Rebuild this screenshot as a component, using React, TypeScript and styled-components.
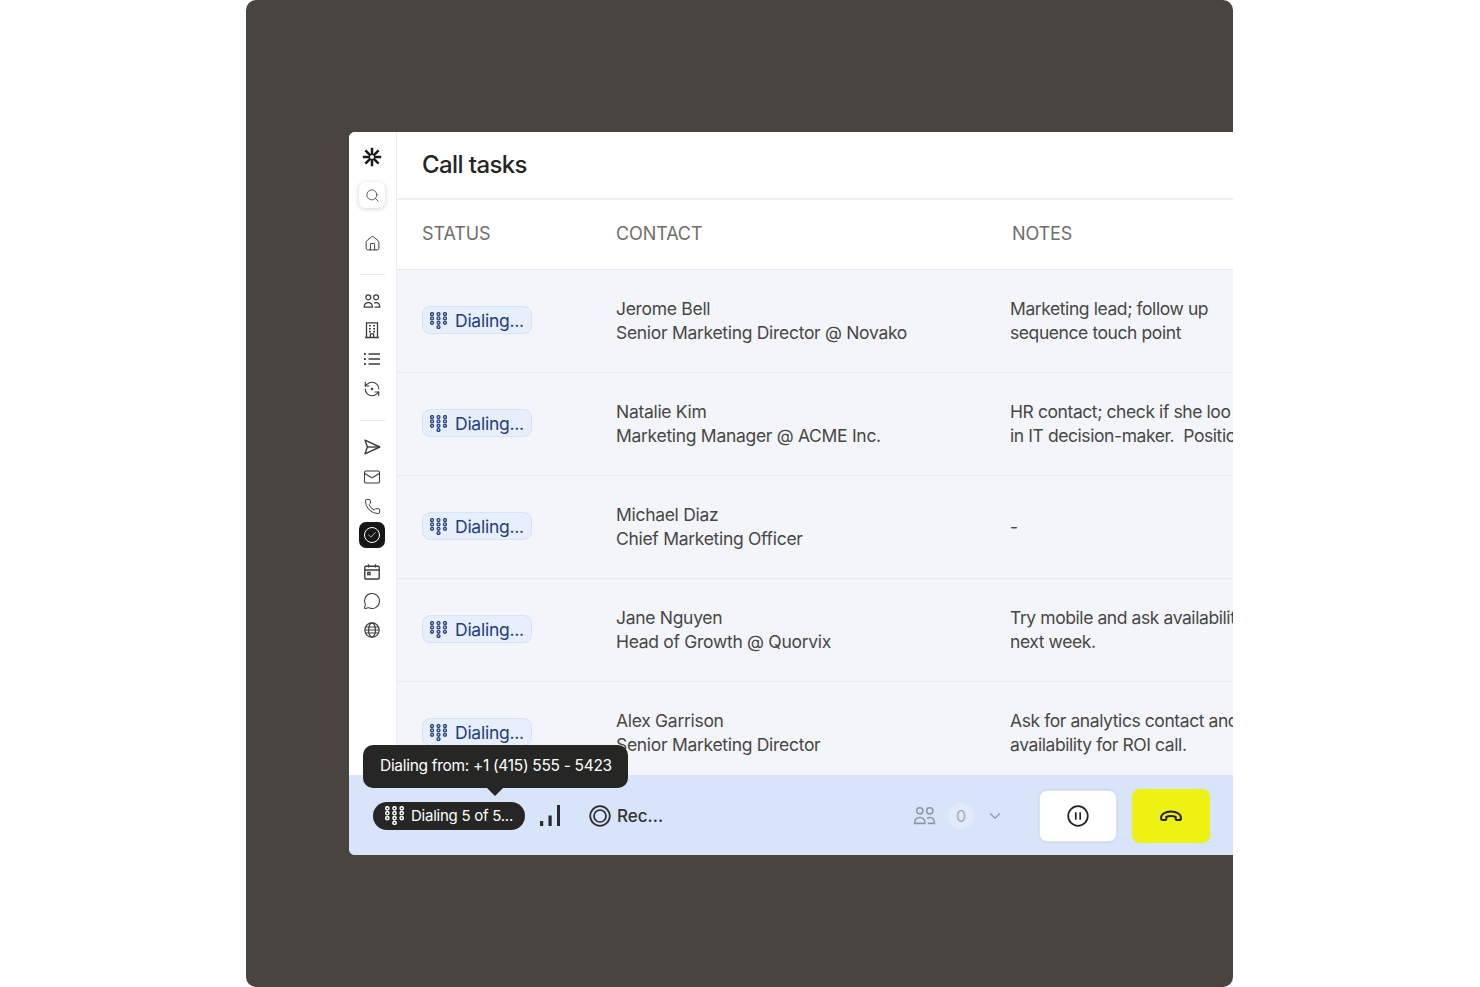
import React from 'react';
import styled, { createGlobalStyle } from 'styled-components';
import {
  Check,
  ChevronDown,
  House,
  Mail,
  MessageCircle,
  Phone,
  RefreshCcwDot,
  Search,
} from 'lucide-react';

interface CallTask {
  name: string;
  role: string;
  notes: string[];
}

const tasks: CallTask[] = [
  {
    name: 'Jerome Bell',
    role: 'Senior Marketing Director @ Novako',
    notes: ['Marketing lead; follow up', 'sequence touch point'],
  },
  {
    name: 'Natalie Kim',
    role: 'Marketing Manager @ ACME Inc.',
    notes: ['HR contact; check if she loo', 'in IT decision-maker.  Position'],
  },
  {
    name: 'Michael Diaz',
    role: 'Chief Marketing Officer',
    notes: ['-'],
  },
  {
    name: 'Jane Nguyen',
    role: 'Head of Growth @ Quorvix',
    notes: ['Try mobile and ask availability', 'next week.'],
  },
  {
    name: 'Alex Garrison',
    role: 'Senior Marketing Director',
    notes: ['Ask for analytics contact and', 'availability for ROI call.'],
  },
];

const DialpadIcon = ({ size = 17 }: { size?: number }) => (
  <svg width={size} height={size} viewBox="0 0 18 18" fill="none" stroke="currentColor" strokeWidth="1.4" style={{ flexShrink: 0 }}>
    {[2.2, 9, 15.8].map((x) =>
      [2.2, 6.8, 11.4].map((y) => <circle key={`${x}-${y}`} cx={x} cy={y} r="1.55" />),
    )}
    <circle cx="9" cy="15.9" r="1.55" />
  </svg>
);

const LogoIcon = () => (
  <svg width="20" height="20" viewBox="0 0 20 20" stroke="#1c1c1c" strokeWidth="2.5">
    <path d="M10 .8v7.400M10 11.800v7.400M.8 10h7.400M11.800 10h7.400M3.400 3.400l5.200 5.200M11.400 11.400l5.200 5.200M16.600 3.400l-5.200 5.200M8.600 11.400l-5.200 5.200" />
  </svg>
);

const PeopleIcon = ({ size = 18 }: { size?: number }) => (
  <svg width={size} height={size} viewBox="0 0 22 20" fill="none" stroke="currentColor" strokeWidth="1.5">
    <circle cx="6.500" cy="5.500" r="3" />
    <circle cx="16" cy="5.500" r="3" />
    <path d="M1.500 17.500c0-3.600 2-5.600 5-5.600s5 2 5 5.600z" />
    <path d="M14.200 17.500h6.300c0-3.600-1.700-5.600-4.500-5.600-1 0-1.900.3-2.600.8" />
  </svg>
);

const BuildingIcon = () => (
  <svg width="18" height="18" viewBox="0 0 18 18" fill="none" stroke="currentColor" strokeWidth="1.3">
    <path d="M2 16.500h14M3.500 16.500V1.800h11v14.700" />
    <path d="M7.400 16.500v-3.600h3.200v3.600" />
    <path d="M6 4.800h1.800M10.200 4.800H12M6 7.800h1.800M10.200 7.800H12M6 10.600h1.800M10.200 10.600H12" strokeWidth="1.6" />
  </svg>
);

const ListIcon = () => (
  <svg width="18" height="18" viewBox="0 0 18 18" fill="none" stroke="currentColor" strokeWidth="1.4">
    <path d="M5.500 4h11.500M5.500 9h11.500M5.500 14h11.500" />
    <path d="M1 4h1.800M1 9h1.800M1 14h1.800" strokeWidth="2" />
  </svg>
);

const SendIcon = () => (
  <svg width="18" height="18" viewBox="0 0 18 18" fill="none" stroke="currentColor" strokeWidth="1.4" strokeLinejoin="round">
    <path d="M2 2.200 16.800 9 2 15.800 4.400 9z" />
    <path d="M4.400 9h12.400" />
  </svg>
);

const CalendarIcon = () => (
  <svg width="18" height="18" viewBox="0 0 18 18" fill="none" stroke="currentColor" strokeWidth="1.4">
    <rect x="1.800" y="3.200" width="14.400" height="12.800" rx="1" />
    <path d="M1.800 7h14.400M5.500 1.200v3.400M12.500 1.200v3.400" />
    <rect x="4.800" y="9.400" width="2.200" height="2.200" />
  </svg>
);

const GlobeIcon = () => (
  <svg width="18" height="18" viewBox="0 0 18 18" fill="none" stroke="currentColor" strokeWidth="1.2">
    <circle cx="9" cy="9" r="7.200" />
    <ellipse cx="9" cy="9" rx="3.400" ry="7.200" />
    <path d="M2.600 6h12.800M1.800 9h14.400M2.600 12h12.800" />
  </svg>
);

const SignalIcon = () => (
  <svg width="20" height="22" viewBox="0 0 20 22" fill="#2b2b2b">
    <rect x="0" y="16" width="3.200" height="5" />
    <rect x="8.500" y="10.500" width="3.200" height="10.500" />
    <rect x="17" y="0" width="3.200" height="21" />
  </svg>
);

const RecordIcon = () => (
  <svg width="22" height="22" viewBox="0 0 22 22" fill="none" stroke="#2b2b2b" strokeWidth="1.7">
    <circle cx="11" cy="11" r="9.800" />
    <circle cx="11" cy="11" r="6" />
  </svg>
);

const PauseIcon = () => (
  <svg width="22" height="22" viewBox="0 0 22 22" fill="none" stroke="#222" strokeWidth="1.7">
    <circle cx="11" cy="11" r="9.800" />
    <path d="M8.800 7.300v7.400M13.200 7.300v7.400" />
  </svg>
);

const HangUpIcon = () => (
  <svg width="24" height="14" viewBox="0 0 24 14" fill="none" stroke="#222" strokeWidth="2" strokeLinejoin="round">
    <path d="M2 9.200C2 5 6.500 2.500 12 2.500S22 5 22 9.200c0 1.200-.7 1.800-1.700 1.800h-2c-1 0-1.600-.6-1.600-1.600V8c-1.300-.7-3-1-4.700-1s-3.400.3-4.700 1v1.400c0 1-.6 1.600-1.600 1.600h-2C2.700 11 2 10.400 2 9.200z" />
  </svg>
);

const DialingPill = () => (
  <StatusPill>
    <DialpadIcon />
    Dialing...
  </StatusPill>
);

const App: React.FC = () => {
  return (
    <>
      <GlobalStyle />
      <Stage>
        <Frame>
          <Panel>
            <Body>
              <Sidebar>
                <NavSlot>
                  <LogoIcon />
                </NavSlot>
                <SearchBox>
                  <Search size={15} strokeWidth={1.3} />
                </SearchBox>
                <NavSlot $top={21}>
                  <House size={17} strokeWidth={1.4} />
                </NavSlot>
                <Divider />
                <NavSlot>
                  <PeopleIcon />
                </NavSlot>
                <NavSlot>
                  <BuildingIcon />
                </NavSlot>
                <NavSlot>
                  <ListIcon />
                </NavSlot>
                <NavSlot $top={1}>
                  <RefreshCcwDot size={18} strokeWidth={1.5} />
                </NavSlot>
                <Divider $top={17} />
                <NavSlot>
                  <SendIcon />
                </NavSlot>
                <NavSlot $top={1}>
                  <Mail size={18} strokeWidth={1.4} />
                </NavSlot>
                <NavSlot $top={1}>
                  <Phone size={17} strokeWidth={1.4} />
                </NavSlot>
                <ActiveNav>
                  <CheckRing>
                    <Check size={10} strokeWidth={1.8} />
                  </CheckRing>
                </ActiveNav>
                <NavSlot $top={9}>
                  <CalendarIcon />
                </NavSlot>
                <NavSlot>
                  <MessageCircle size={18} strokeWidth={1.4} />
                </NavSlot>
                <NavSlot>
                  <GlobeIcon />
                </NavSlot>
              </Sidebar>
              <Main>
                <TitleBar>
                  <Title>Call tasks</Title>
                </TitleBar>
                <TableHead>
                  <span>Status</span>
                  <span>Contact</span>
                  <NotesHeading>Notes</NotesHeading>
                </TableHead>
                {tasks.map((task) => (
                  <Row key={task.name}>
                    <DialingPill />
                    <Cell>
                      <div>{task.name}</div>
                      <div>{task.role}</div>
                    </Cell>
                    <NotesCell>
                      {task.notes.map((line) => (
                        <div key={line}>{line}</div>
                      ))}
                    </NotesCell>
                  </Row>
                ))}
              </Main>
            </Body>
            <CallBar>
              <Tooltip>Dialing from: +1 (415) 555 - 5423</Tooltip>
              <DarkPill>
                <DialpadIcon size={19} />
                Dialing 5 of 5...
              </DarkPill>
              <SignalBox>
                <SignalIcon />
              </SignalBox>
              <RecordBox>
                <RecordIcon />
                Rec...
              </RecordBox>
              <Participants>
                <PeopleIcon size={23} />
                <CountBadge>0</CountBadge>
                <ChevronDown size={18} strokeWidth={1.5} />
              </Participants>
              <PauseButton>
                <PauseIcon />
              </PauseButton>
              <HangUpButton>
                <HangUpIcon />
              </HangUpButton>
            </CallBar>
          </Panel>
        </Frame>
      </Stage>
    </>
  );
};

export default App;

// Styling
const GlobalStyle = createGlobalStyle`
  html, body {
    margin: 0;
    background: #fff;
  }
  * {
    box-sizing: border-box;
  }
`;

const Stage = styled.div`
  width: 1480px;
  height: 987px;
  padding-left: 246px;
  overflow: hidden;
  font-family: Inter, 'Liberation Sans', sans-serif;
`;

const Frame = styled.div`
  width: 987px;
  height: 987px;
  padding: 132px 0 0 103px;
  background: #494440;
  border-radius: 10px;
  overflow: hidden;
`;

const Panel = styled.div`
  width: 884px;
  height: 723px;
  display: flex;
  flex-direction: column;
  background: #fff;
  border-radius: 6px 0 0 6px;
`;

const Body = styled.div`
  flex: 1;
  min-height: 0;
  display: flex;
  overflow: hidden;
  border-radius: 6px 0 0 0;
`;

const Sidebar = styled.nav`
  width: 48px;
  flex-shrink: 0;
  padding: 10px 1px 0 0;
  display: flex;
  flex-direction: column;
  align-items: center;
  background: #fff;
  border-right: 1px solid #eceef3;
  color: #3d3d3b;
`;

const NavSlot = styled.div<{ $top?: number }>`
  width: 26px;
  height: 29px;
  flex-shrink: 0;
  margin-top: ${(p) => p.$top ?? 0}px;
  display: flex;
  align-items: center;
  justify-content: center;
`;

const SearchBox = styled.div`
  width: 26px;
  height: 26px;
  margin-top: 11px;
  display: flex;
  align-items: center;
  justify-content: center;
  background: #fff;
  border-radius: 7px;
  box-shadow: 0 1px 5px rgba(30, 35, 60, 0.18);
`;

const Divider = styled.div<{ $top?: number }>`
  width: 25px;
  height: 1px;
  flex-shrink: 0;
  margin: ${(p) => p.$top ?? 16}px 0 11px;
  background: #e9e9ea;
`;

const ActiveNav = styled.div`
  width: 26px;
  height: 26px;
  flex-shrink: 0;
  margin-top: 1px;
  display: flex;
  align-items: center;
  justify-content: center;
  background: #161616;
  border-radius: 7px;
`;

const CheckRing = styled.div`
  width: 16px;
  height: 16px;
  display: flex;
  align-items: center;
  justify-content: center;
  color: #fff;
  border: 1.3px solid #fff;
  border-radius: 50%;
`;

const Main = styled.main`
  flex: 1;
  min-width: 0;
  overflow: hidden;
`;

const TitleBar = styled.header`
  height: 68px;
  padding-left: 25px;
  padding-bottom: 2px;
  display: flex;
  align-items: center;
  border-bottom: 2px solid #eeeff2;
`;

const Title = styled.h1`
  margin: 0;
  font-size: 24px;
  font-weight: 500;
  letter-spacing: -0.6px;
  color: #252524;
`;

const TableHead = styled.div`
  height: 69px;
  padding-left: 25px;
  padding-bottom: 2px;
  display: grid;
  grid-template-columns: 194px 394px 1fr;
  align-items: center;
  font-size: 18px;
  letter-spacing: -0.1px;
  color: #6f6e6a;
  text-transform: uppercase;
`;

const NotesHeading = styled.span`
  padding-left: 2px;
`;

const Row = styled.div`
  height: 103px;
  padding-left: 25px;
  display: grid;
  grid-template-columns: 194px 394px 1fr;
  align-items: center;
  background: #f3f5fb;
  border-top: 1px solid #e8eaf0;
`;

const StatusPill = styled.div`
  width: 110px;
  height: 28px;
  margin-bottom: 2px;
  padding-left: 7px;
  display: flex;
  align-items: center;
  gap: 8px;
  font-size: 17.5px;
  letter-spacing: -0.25px;
  color: #21407a;
  background: #e7eefc;
  border: 1px solid #d8e3f8;
  border-radius: 8px;
`;

const Cell = styled.div`
  font-size: 17.5px;
  letter-spacing: -0.3px;
  line-height: 24.5px;
  color: #474744;
  white-space: pre;
`;

const NotesCell = styled(Cell)`
  letter-spacing: -0.42px;
`;

const CallBar = styled.footer`
  position: relative;
  height: 80px;
  flex-shrink: 0;
  padding: 1px 23px 0 24px;
  display: flex;
  align-items: center;
  background: #d8e4fa;
  border-radius: 0 0 0 6px;
`;

const Tooltip = styled.div`
  position: absolute;
  left: 14px;
  top: -30px;
  width: 265px;
  height: 43px;
  padding: 0 0 2px 17px;
  display: flex;
  align-items: center;
  font-size: 15.5px;
  letter-spacing: -0.3px;
  color: #fff;
  background: #262624;
  border-radius: 10px;
  white-space: nowrap;

  &::after {
    content: '';
    position: absolute;
    left: 124px;
    bottom: -8px;
    border-left: 8px solid transparent;
    border-right: 8px solid transparent;
    border-top: 8px solid #262624;
  }
`;

const DarkPill = styled.div`
  width: 152px;
  height: 28px;
  padding-left: 12px;
  display: flex;
  align-items: center;
  gap: 7px;
  font-size: 15px;
  letter-spacing: -0.25px;
  color: #fff;
  background: #262624;
  border-radius: 14px;
  white-space: nowrap;
`;

const SignalBox = styled.div`
  margin-left: 15px;
  display: flex;
`;

const RecordBox = styled.div`
  margin-left: 29px;
  display: flex;
  align-items: center;
  gap: 6px;
  font-size: 17px;
  font-weight: 500;
  color: #333331;
`;

const Participants = styled.div`
  margin-left: auto;
  margin-right: -1px;
  display: flex;
  align-items: center;
  gap: 12px;
  color: #8e97a8;
`;

const CountBadge = styled.div`
  width: 26px;
  height: 26px;
  display: flex;
  align-items: center;
  justify-content: center;
  font-size: 16px;
  color: #a3abb9;
  background: #e2eafa;
  border-radius: 50%;
`;

const PauseButton = styled.button`
  width: 78px;
  height: 52px;
  margin-left: 36px;
  padding: 0;
  display: flex;
  align-items: center;
  justify-content: center;
  background: #fff;
  border: 1px solid #dfe2ea;
  border-radius: 8px;
  box-shadow: 0 0 0 1px rgba(200, 205, 220, 0.4);
`;

const HangUpButton = styled.button`
  width: 78px;
  height: 54px;
  margin-left: 15px;
  padding: 0;
  display: flex;
  align-items: center;
  justify-content: center;
  background: #eef212;
  border: none;
  border-radius: 8px;
`;
